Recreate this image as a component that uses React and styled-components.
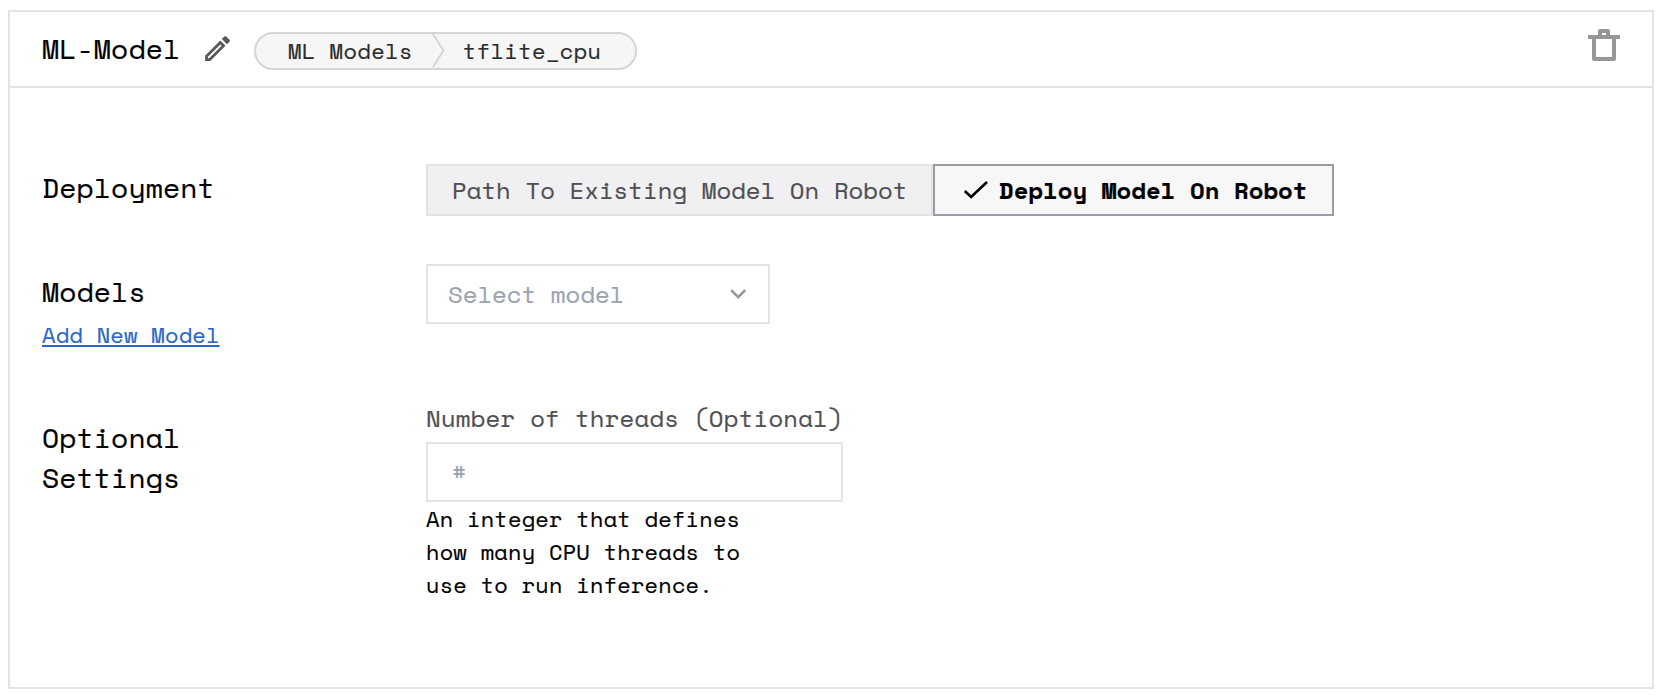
import React from 'react';
import styled, { createGlobalStyle } from 'styled-components';

const GlobalStyle = createGlobalStyle`
  * { box-sizing: border-box; }
  body {
    margin: 0;
    background: #fff;
    color: #000;
    font-family: "Space Mono", "DejaVu Sans Mono", monospace;
    -webkit-text-stroke: 0.2px currentColor;
  }
  button, input { font-family: inherit; margin: 0; border-radius: 0; }
`;

const Card = styled.section`
  width: 1646px;
  height: 679px;
  margin: 10px 0 0 8px;
  border: 2px solid #e3e3e4;
  display: flex;
  flex-direction: column;
`;

const Header = styled.header`
  height: 76px;
  flex: none;
  display: flex;
  align-items: flex-start;
  padding: 0 32px;
  border-bottom: 2px solid #e3e3e4;
`;

const Title = styled.h2`
  margin: 17px 0 0;
  width: 137px;
  font-size: 28px;
  font-weight: 400;
  line-height: 40px;
  letter-spacing: 0.14px;
  white-space: nowrap;
`;

const IconButton = styled.button`
  border: 0;
  padding: 0;
  background: none;
  display: flex;
  color: ${(p) => p.$color};
  margin: ${(p) => p.$margin};
`;

const Breadcrumb = styled.nav`
  margin: 20px 0 0 20px;
  width: 383px;
  height: 38px;
  display: flex;
  border: 2px solid #d5d5d7;
  border-radius: 19px;
  background: #f6f6f6;
  color: #2a2b2a;
  padding-left: 32px;
`;

const Crumb = styled.span`
  font-size: 22px;
  line-height: 33px;
  letter-spacing: 0.4px;
  white-space: nowrap;
`;

const CrumbDivider = styled.svg`
  display: block;
  flex: none;
  margin: 0 18px 0 19px;
`;

const Body = styled.div`
  padding: 76px 32px 0;
  display: flex;
  flex-direction: column;
  gap: 48px;
`;

const Row = styled.div`
  display: grid;
  grid-template-columns: 384px 1fr;
`;

const RowLabel = styled.div`
  padding-top: ${(p) => p.$top}px;
  width: 240px;
  font-size: 28px;
  line-height: 40px;
  letter-spacing: 0.14px;
`;

const AddLink = styled.a`
  display: block;
  width: max-content;
  margin: 6px 0 1px;
  font-size: 22px;
  line-height: 33px;
  letter-spacing: 0.2px;
  color: #2a66cb;
  text-decoration: underline;
  text-decoration-thickness: 2px;
  text-underline-offset: 2px;
  text-decoration-skip-ink: none;
`;

const Segments = styled.div`
  display: flex;
`;

const Segment = styled.button`
  display: flex;
  align-items: center;
  width: ${(p) => p.$width}px;
  height: 52px;
  padding: 0 0 0 ${(p) => (p.$active ? 28 : 24)}px;
  border: 2px solid ${(p) => (p.$active ? '#9c9ca4' : '#e3e3e4')};
  background: ${(p) => (p.$active ? '#f7f7f8' : '#f0f0f2')};
  color: ${(p) => (p.$active ? '#000' : '#4f4f52')};
  font-size: 24px;
  font-weight: ${(p) => (p.$active ? 700 : 400)};
  line-height: 36px;
  white-space: nowrap;
`;

const CheckIcon = styled.svg`
  flex: none;
  margin-right: 10px;
`;

const Select = styled.button`
  width: 344px;
  height: 60px;
  display: flex;
  align-items: center;
  justify-content: space-between;
  padding: 0 18px 0 20px;
  border: 2px solid #e3e3e4;
  background: #fff;
  color: #9ca3af;
  font-size: 24px;
  line-height: 36px;
`;

const Field = styled.div`
  display: flex;
  flex-direction: column;
`;

const FieldLabel = styled.label`
  font-size: 24px;
  line-height: 36px;
  letter-spacing: 0.2px;
  color: #4f5054;
`;

const NumberInput = styled.input`
  margin-top: 6px;
  width: 417px;
  height: 60px;
  padding: 0 24px;
  border: 2px solid #e3e3e4;
  background: #fff;
  font-size: 23px;
  &::placeholder { color: #9ca3af; opacity: 1; }
`;

const Hint = styled.p`
  margin: 0;
  width: 330px;
  font-size: 22px;
  line-height: 33px;
  letter-spacing: 0.2px;
`;

export default function App() {
  return (
    <>
      <GlobalStyle />
      <Card>
        <Header>
          <Title>ML-Model</Title>
          <IconButton $color="#58585a" $margin="20px 0 0 22px" aria-label="Rename">
            <svg width="33" height="33" viewBox="0 0 24 24" fill="currentColor">
              <path d="M14.06 9.02l.92.92L5.92 19H5v-.92l9.06-9.06M17.66 3c-.25 0-.51.1-.7.29l-1.83 1.83 3.75 3.75 1.83-1.83c.39-.39.39-1.02 0-1.41l-2.34-2.34c-.2-.2-.45-.29-.71-.29zm-3.6 3.19L3 17.25V21h3.75L17.81 9.94l-3.75-3.75z" />
            </svg>
          </IconButton>
          <Breadcrumb>
            <Crumb>ML Models</Crumb>
            <CrumbDivider width="13" height="34" viewBox="0 0 13 34" fill="none" stroke="#d5d5d7" strokeWidth="2">
              <path d="M1 0l10.5 16.5L1 33" />
            </CrumbDivider>
            <Crumb>tflite_cpu</Crumb>
          </Breadcrumb>
          <IconButton $color="#979797" $margin="17px 0 0 auto" aria-label="Delete">
            <svg width="32" height="32" viewBox="0 0 32 32" fill="none" stroke="currentColor">
              <path d="M0 8h32" strokeWidth="4" />
              <path d="M12 7V2h8v5" strokeWidth="4" strokeLinejoin="round" />
              <path d="M6 9v21h20V9" strokeWidth="4" strokeLinejoin="round" />
            </svg>
          </IconButton>
        </Header>
        <Body>
          <Row>
            <RowLabel $top={4}>Deployment</RowLabel>
            <Segments>
              <Segment $width={507}>Path To Existing Model On Robot</Segment>
              <Segment $active $width={401}>
                <CheckIcon width="26" height="26" viewBox="0 0 26 26" fill="none" stroke="currentColor" strokeWidth="2.6">
                  <path d="M1.8 14l6.3 6L24 5" />
                </CheckIcon>
                Deploy Model On Robot
              </Segment>
            </Segments>
          </Row>
          <Row>
            <RowLabel $top={8}>
              Models
              <AddLink>Add New Model</AddLink>
            </RowLabel>
            <Select>
              Select model
              <svg width="20" height="20" viewBox="0 0 20 20" fill="none" stroke="#98989c" strokeWidth="2.6">
                <path d="M1.2 6.2l7 7 7-7" />
              </svg>
            </Select>
          </Row>
          <Row>
            <RowLabel $top={18}>
              Optional
              <br />
              Settings
            </RowLabel>
            <Field>
              <FieldLabel htmlFor="threads">Number of threads (Optional)</FieldLabel>
              <NumberInput id="threads" placeholder="#" />
              <Hint>An integer that defines how many CPU threads to use to run inference.</Hint>
            </Field>
          </Row>
        </Body>
      </Card>
    </>
  );
}
